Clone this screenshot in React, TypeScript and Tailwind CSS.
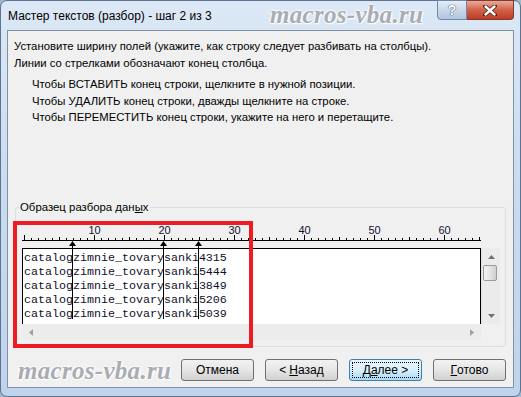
const ui = { fontFamily: '"Liberation Sans", Arial, sans-serif' };
const mono = { fontFamily: '"Liberation Mono", "Courier New", monospace' };
const mark = { fontFamily: '"Liberation Serif", "Times New Roman", serif' };

const breaks = [50.5, 141.5, 176.5];

function Ruler() {
  const ticks = [];
  for (let i = 0; i <= 65; i++) {
    const x = 2.5 + i * 7;
    const h = i % 10 === 0 ? 5 : i % 5 === 0 ? 3 : 2;
    ticks.push(<line key={i} x1={x} x2={x} y1={18 - h} y2={19} stroke="#000" strokeWidth={1} />);
  }
  return (
    <svg width={460} height={26} className="block">
      <line x1={0} x2={459} y1={18.5} y2={18.5} stroke="#000" strokeWidth={1} />
      {ticks}
      {[10, 20, 30, 40, 50, 60].map((n) => (
        <text key={n} x={2.5 + n * 7} y={12} textAnchor="middle" fontSize={11} fill="#101030" style={ui}>
          {n}
        </text>
      ))}
    </svg>
  );
}

function Btn({ children, primary }: { children: React.ReactNode; primary?: boolean }) {
  return (
    <div
      className={
        "w-[73px] h-[22px] rounded-[3px] border flex items-center justify-center text-[12px] text-black " +
        (primary
          ? "border-[#3c7fb1] bg-gradient-to-b from-[#eaf6fd] via-[#d9f0fc] to-[#a7d9f5] p-[2px]"
          : "border-[#707070] bg-gradient-to-b from-[#f2f2f2] via-[#e6e6e6] to-[#d0d0d0]")
      }
      style={ui}
    >
      {primary ? (
        <div className="w-full h-full border border-dotted border-black flex items-center justify-center">{children}</div>
      ) : (
        children
      )}
    </div>
  );
}

const glow = { ...mark, textShadow: "0 0 2px #fff, 0 0 2px #fff, 0 0 3px #fff, 1px 1px 1px #fff" };

export default function App() {
  const rows = ["4315", "5444", "3849", "5206", "5039"];
  return (
    <div className="w-[521px] h-[397px] overflow-hidden bg-[#9fb6d1]">
      <div className="w-[521px] h-[397px] flex flex-col rounded-[7px] bg-gradient-to-b from-[#dce8f5] via-[#c9dbef] to-[#bfd3eb] border border-[#5c7392]">
        {/* title bar */}
        <div className="h-[29px] relative flex items-start">
          <div className="pl-[7px] pt-[7px] text-[12px] leading-[16px] text-black" style={ui}>
            Мастер текстов (разбор) - шаг 2 из 3
          </div>
          <div
            className="absolute left-[269px] top-[1px] text-[25px] leading-[26px] italic font-bold text-[#a9adb3] tracking-[0.3px]"
            style={glow}
          >
            macros-vba.ru
          </div>
          <div className="ml-auto mr-[6px] flex -mt-px">
            <div className="w-[30px] h-[20px] rounded-bl-[4px] border border-[#6f86a5] bg-gradient-to-b from-[#e4edf7] via-[#c9d8ea] to-[#b1c6e0] flex items-center justify-center">
              <span className="text-[14px] font-bold leading-none text-white" style={{ ...ui, textShadow: "0 0 1px #2b3f5c, 0 0 1px #2b3f5c" }}>?</span>
            </div>
            <div className="w-[47px] h-[20px] rounded-br-[4px] border border-l-0 border-[#7d3a2e] bg-gradient-to-b from-[#e9a99a] via-[#d2604a] to-[#c03a22] flex items-center justify-center">
              <svg width={14} height={11} viewBox="0 0 14 11">
                <path d="M2 1 L12 10 M12 1 L2 10" stroke="#4a1a12" strokeWidth={4} strokeLinecap="round" fill="none" />
                <path d="M2.5 1.5 L11.5 9.5 M11.5 1.5 L2.5 9.5" stroke="#fff" strokeWidth={2.4} strokeLinecap="round" fill="none" />
              </svg>
            </div>
          </div>
        </div>

        {/* client area */}
        <div className="relative mx-[6px] h-[358px] border border-[#8391a6] bg-[#f0f0f0] flex flex-col">
          <div className="h-[176px] pl-[6px] pt-[7px] text-[11.3px] text-black" style={ui}>
            <div className="leading-[17px]">Установите ширину полей (укажите, как строку следует разбивать на столбцы).</div>
            <div className="leading-[17px]">Линии со стрелками обозначают конец столбца.</div>
            <div className="mt-[4px] ml-[18px] leading-[16.5px]">
              <div>Чтобы ВСТАВИТЬ конец строки, щелкните в нужной позиции.</div>
              <div>Чтобы УДАЛИТЬ конец строки, дважды щелкните на строке.</div>
              <div>Чтобы ПЕРЕМЕСТИТЬ конец строки, укажите на него и перетащите.</div>
            </div>
          </div>

          {/* group box */}
          <div className="relative ml-[7px] w-[491px] h-[140px] border border-[#d5dfe5] rounded-[3px]">
            <div className="absolute -top-[9px] left-[3px] px-[1px] bg-[#f0f0f0] text-[11.4px] leading-[16px] text-black" style={ui}>
              Образец разбора дан<span className="underline">ы</span>х
            </div>
            <div className="relative pl-[6px] pt-[14px]">
              <Ruler />
              <div className="flex">
                <div className="w-[459px] flex flex-col">
                  <div className="h-[76px] bg-white border-t border-l border-r border-black pt-[2px] pl-[1px] text-[11.67px] leading-[14px] text-[#10102a]" style={mono}>
                    {rows.map((r) => (
                      <div key={r} className="whitespace-pre">catalogzimnie_tovarysanki{r}</div>
                    ))}
                  </div>
                  <div className="h-[16px] bg-[#ececec] flex items-center justify-between px-[7px]">
                    <svg width={4} height={7}><path d="M4 0 L0 3.5 L4 7 Z" fill="#a0a0a0" /></svg>
                    <svg width={4} height={7}><path d="M0 0 L4 3.5 L0 7 Z" fill="#a0a0a0" /></svg>
                  </div>
                </div>
                <div className="w-[19px] flex flex-col">
                  <div className="h-[76px] bg-[#ebebeb] border-l border-[#e2e2e2] flex flex-col items-center">
                    <svg width={7} height={4} className="mt-[7px]"><path d="M0 4 L3.5 0 L7 4 Z" fill="#707070" /></svg>
                    <div className="mt-[6px] w-[14px] h-[16px] -ml-[2px] rounded-[2px] border border-[#9b9b9b] bg-gradient-to-r from-[#f4f4f4] via-[#e4e4e4] to-[#cfcfcf]" />
                    <svg width={7} height={4} className="mt-auto mb-[6px]"><path d="M0 0 L3.5 4 L7 0 Z" fill="#707070" /></svg>
                  </div>
                  <div className="h-[16px] bg-[#f0f0f0]" />
                </div>
              </div>
              {/* column break markers */}
              <svg width={460} height={80} className="absolute left-[6px] top-[31px] pointer-events-none">
                {breaks.map((x) => (
                  <g key={x}>
                    <path d={`M${x} 2 L${x - 3.5} 7 L${x + 3.5} 7 Z`} fill="#000" />
                    <line x1={x} x2={x} y1={4} y2={80} stroke="#000" strokeWidth={1} />
                  </g>
                ))}
              </svg>
            </div>
          </div>

          {/* buttons */}
          <div className="mt-[12px] pl-[10px] pr-[7px] flex items-start">
            <div className="text-[25px] leading-[26px] italic font-bold text-[#a9adb3] tracking-[0.3px] -mt-[1px]" style={glow}>
              macros-vba.ru
            </div>
            <div className="ml-auto flex gap-[11px]">
              <Btn>Отмена</Btn>
              <Btn>
                &lt; <span className="underline ml-[3px]">Н</span>азад
              </Btn>
              <Btn primary>
                Д<span className="underline">а</span>лее &gt;
              </Btn>
              <Btn>
                <span className="underline">Г</span>отово
              </Btn>
            </div>
          </div>

          {/* red highlight */}
          <div className="absolute left-[5px] top-[190px] w-[240px] h-[127px] border-4 border-[#ed1c24] pointer-events-none" />
        </div>
      </div>
    </div>
  );
}
